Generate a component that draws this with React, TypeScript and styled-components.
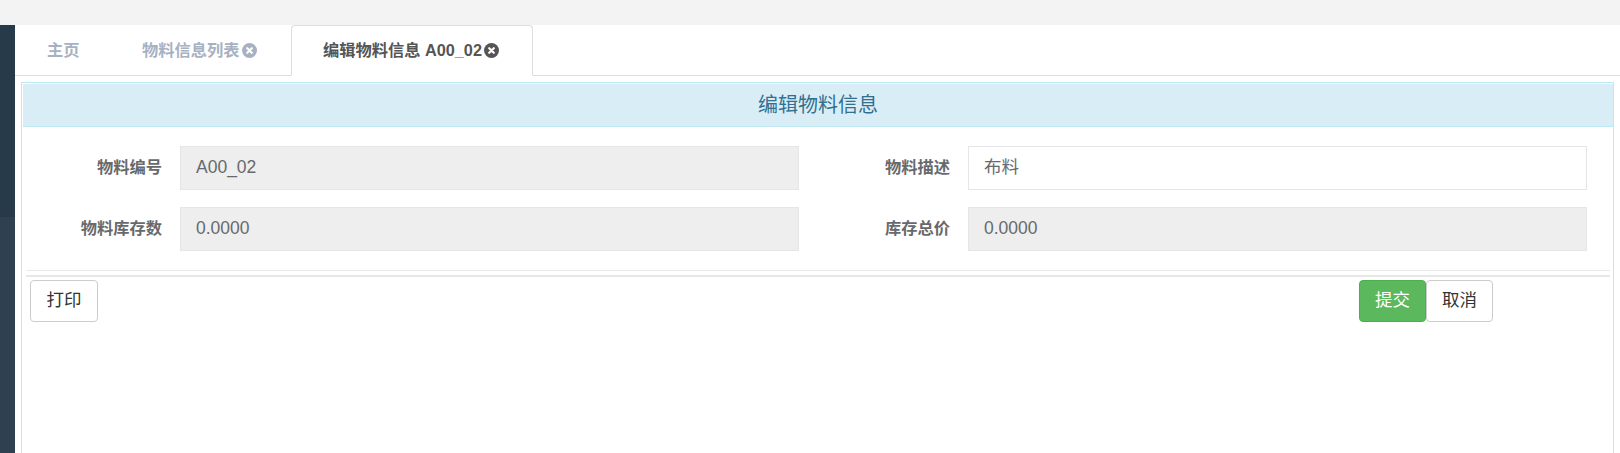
import React from 'react';
import styled, { createGlobalStyle } from 'styled-components';

const GlobalStyle = createGlobalStyle`
  html, body {
    margin: 0;
    padding: 0;
    height: 100%;
    background: #fff;
    overflow: hidden;
  }
  body {
    font-family: 'Liberation Sans', 'Noto Sans CJK SC', sans-serif;
    font-size: 16.25px;
    color: #676a6c;
  }
  * { box-sizing: border-box; }
`;

const Page = styled.div`
  width: 1620px;
  height: 453px;
  display: flex;
  flex-direction: column;
`;

const TopStrip = styled.div`
  height: 25px;
  flex: none;
  background: #f3f3f3;
`;

const Body = styled.div`
  flex: 1;
  display: flex;
  min-height: 0;
`;

const Sidebar = styled.div`
  width: 15px;
  flex: none;
  background: #2f4050;
`;

const SidebarActive = styled.div`
  height: 192px;
  background: #273a4a;
`;

const Main = styled.div`
  flex: 1;
  display: flex;
  flex-direction: column;
  min-width: 0;
`;

const TabBar = styled.div`
  height: 51px;
  flex: none;
  display: flex;
  border-bottom: 1px solid #ddd;
`;

const Tab = styled.div<{ $active?: boolean; $width: number }>`
  width: ${p => p.$width}px;
  height: ${p => (p.$active ? '51px' : '50px')};
  padding: 0 0 0 32px;
  display: flex;
  align-items: center;
  font-weight: 700;
  font-size: 16.25px;
  line-height: 1;
  color: ${p => (p.$active ? '#555' : '#a7b1c2')};
  background: #fff;
  ${p =>
    p.$active &&
    `
    padding-left: 31px;
    border: 1px solid #ddd;
    border-bottom-color: #fff;
    border-radius: 4px 4px 0 0;
  `}
`;

const CloseDot = styled.svg`
  width: 15px;
  height: 15px;
  margin-left: 2px;
  flex: none;
`;

const CloseIcon = ({ color }: { color: string }) => (
  <CloseDot viewBox="0 0 15 15">
    <circle cx="7.5" cy="7.5" r="7.5" fill={color} />
    <path d="M5.2 5.2l4.6 4.6M9.8 5.2l-4.6 4.6" stroke="#fff" strokeWidth="2.2" strokeLinecap="round" />
  </CloseDot>
);

const Content = styled.div`
  flex: 1;
  min-height: 0;
  padding: 6px 6px 0;
`;

const Panel = styled.div`
  height: 100%;
  border: 1px solid #bce8f1;
  border-bottom: none;
  padding: 1px 0 0 1px;
`;

const PanelHeading = styled.div`
  height: 43px;
  background: #d9edf7;
  border-bottom: 1px solid #bce8f1;
  color: #31708f;
  font-size: 20px;
  line-height: 1;
  display: flex;
  align-items: center;
  justify-content: center;
`;

const FormGrid = styled.div`
  display: grid;
  grid-template-columns: 157px 619px 169px 619px;
  grid-auto-rows: 44px;
  row-gap: 17px;
  padding-top: 19px;
`;

const Label = styled.label`
  display: flex;
  align-items: center;
  justify-content: flex-end;
  padding: 0 18px 2px 0;
  font-weight: 700;
  font-size: 16.25px;
  line-height: 1;
  color: #676a6c;
`;

const Field = styled.div<{ $readOnly?: boolean }>`
  display: flex;
  align-items: center;
  padding: 0 15px 1px;
  font-size: 17.5px;
  line-height: 1;
  color: #676a6c;
  border: 1px solid #e5e6e7;
  background: ${p => (p.$readOnly ? '#eee' : '#fff')};
`;

const ThinRule = styled.div`
  height: 1px;
  margin: 19px 3px 0 3px;
  background: #e7eaec;
`;

const ThickRule = styled.div`
  height: 2px;
  margin: 4px 3px 0 3px;
  background: #e7e7e7;
`;

const Actions = styled.div`
  display: flex;
  justify-content: space-between;
  padding: 3px 0 0 7px;
`;

const ButtonGroup = styled.div`
  display: flex;
  margin-right: 120px;
`;

const Button = styled.div<{ $primary?: boolean; $width?: number }>`
  width: ${p => p.$width ?? 68}px;
  height: 42px;
  display: flex;
  align-items: center;
  justify-content: center;
  font-size: 17.5px;
  line-height: 1;
  border-radius: 4px;
  border: 1px solid ${p => (p.$primary ? '#4cae4c' : '#ccc')};
  background: ${p => (p.$primary ? '#5cb85c' : '#fff')};
  color: ${p => (p.$primary ? '#fff' : '#333')};
`;

export default function App() {
  return (
    <Page>
      <GlobalStyle />
      <TopStrip />
      <Body>
        <Sidebar>
          <SidebarActive />
        </Sidebar>
        <Main>
          <TabBar>
            <Tab $width={95}>主页</Tab>
            <Tab $width={181}>
              物料信息列表
              <CloseIcon color="#a7b1c2" />
            </Tab>
            <Tab $active $width={242}>
              编辑物料信息 A00_02
              <CloseIcon color="#555" />
            </Tab>
          </TabBar>
          <Content>
            <Panel>
              <PanelHeading>编辑物料信息</PanelHeading>
              <FormGrid>
                <Label>物料编号</Label>
                <Field $readOnly>A00_02</Field>
                <Label>物料描述</Label>
                <Field>布料</Field>
                <Label>物料库存数</Label>
                <Field $readOnly>0.0000</Field>
                <Label>库存总价</Label>
                <Field $readOnly>0.0000</Field>
              </FormGrid>
              <ThinRule />
              <ThickRule />
              <Actions>
                <Button>打印</Button>
                <ButtonGroup>
                  <Button $primary $width={67}>提交</Button>
                  <Button $width={67}>取消</Button>
                </ButtonGroup>
              </Actions>
            </Panel>
          </Content>
        </Main>
      </Body>
    </Page>
  );
}
